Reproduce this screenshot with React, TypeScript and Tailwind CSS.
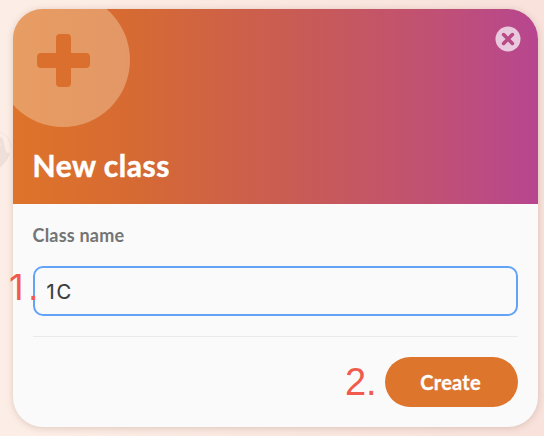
import React from "react";

function PlusBadge() {
  return (
    <svg className="absolute -left-[17px] -top-[16px] h-[134px] w-[134px]" viewBox="0 0 134 134" aria-hidden="true">
      <circle cx="67" cy="67" r="67" fill="#f5d6b0" fillOpacity="0.42" />
      <path
        d="M64 41h7a4 4 0 0 1 4 4v15h15a4 4 0 0 1 4 4v7a4 4 0 0 1-4 4h-15v15a4 4 0 0 1-4 4h-7a4 4 0 0 1-4-4v-15h-15a4 4 0 0 1-4-4v-7a4 4 0 0 1 4-4h15v-15a4 4 0 0 1 4-4z"
        fill="#db702e"
      />
    </svg>
  );
}

function CloseButton() {
  return (
    <button aria-label="Close" className="absolute right-[17px] top-[17px] h-[26px] w-[26px]">
      <svg viewBox="0 0 26 26" className="block h-full w-full">
        <circle cx="13" cy="13" r="12.5" fill="#e9c9dd" />
        <path d="M8.6 8.6l8.8 8.8M17.4 8.6l-8.8 8.8" stroke="#b84a86" strokeWidth="3.6" strokeLinecap="round" />
      </svg>
    </button>
  );
}

export default function App() {
  return (
    <main className="relative h-[436px] w-[544px] overflow-hidden bg-linear-to-r from-[#fceee6] to-[#f8e2db] pl-[12.6px] pt-[9px] font-['Lato',sans-serif]">
      <svg className="absolute left-0 top-[130px] h-[40px] w-[12px]" viewBox="0 0 12 40" aria-hidden="true">
        <path d="M0 7c4 1 4 6 5 11 1 5 3 6 5 4-1 6-5 11-10 16z" fill="#eee0d9" />
        <path d="M0 2c6 2 11 8 11 16" fill="none" stroke="#f2e5de" strokeWidth="1" />
        <path d="M0 14.5h1.5" stroke="#f8eae2" strokeWidth="1.5" />
      </svg>

      <section className="relative flex h-[418px] w-[525px] flex-col overflow-hidden rounded-[30px] bg-[#fafafa] shadow-[0_1px_7px_rgba(120,70,50,0.22)]">
        <header className="relative flex h-[195px] shrink-0 items-end overflow-hidden bg-[linear-gradient(90deg,#de742a_0%,#d66a33_23%,#ca5d50_50%,#c05075_81%,#b74690_100%)] px-5 pb-[21px]">
          <PlusBadge />
          <CloseButton />
          <h1 className="text-[30px] font-bold leading-9 tracking-[0.5px] text-white [-webkit-text-stroke:0.5px_white]">New class</h1>
        </header>

        <form className="flex flex-col px-[20px] pt-[20px]" onSubmit={(e) => e.preventDefault()}>
          <label htmlFor="class-name" className="text-[18px] font-bold leading-[22px] tracking-[0.2px] text-[#747474]">
            Class name
          </label>
          <input
            id="class-name"
            defaultValue="1C"
            className="mt-[20px] h-[50px] w-full rounded-[10px] border-[2.5px] border-[#62a3f8] bg-[#fafafa] px-3 pt-[2px] font-['Inter',sans-serif] text-[20px] tracking-[1.8px] text-[#3b3b3b] outline-none [-webkit-text-stroke:0.2px_#3b3b3b]"
          />
          <div className="mt-[20px] flex items-center justify-end border-t border-[#eaeaea] pt-[20px]">
            <span className="mr-[8px] font-['Liberation_Sans',Arial,sans-serif] text-[38px] leading-[50px] text-[#f15b4d]">2.</span>
            <button className="h-[50px] w-[133px] rounded-full bg-[#dd752c] pr-[1px] text-[20px] font-bold tracking-[0.25px] text-white [-webkit-text-stroke:0.3px_white]">Create</button>
          </div>
        </form>
      </section>

      <span className="absolute left-[9px] top-[265px] flex text-[38px] leading-[44px] text-[#f15b4d]">
        <span className="w-[19px] font-['Inter',sans-serif] text-[36px]">1</span>
        <span className="font-['Liberation_Sans',Arial,sans-serif]">.</span>
      </span>
    </main>
  );
}
